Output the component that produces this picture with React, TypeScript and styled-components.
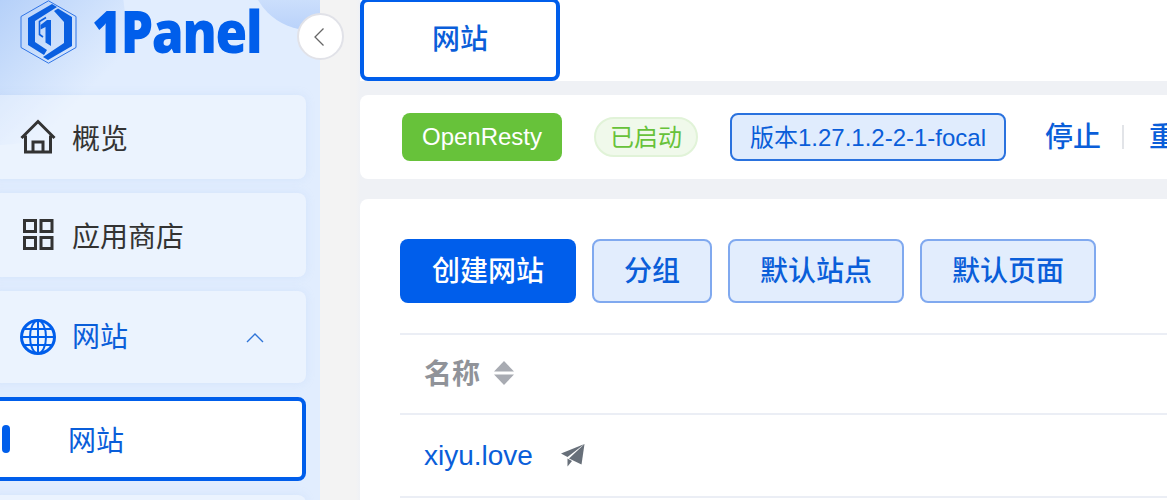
import React from "react";
import styled, { createGlobalStyle } from "styled-components";

const Global = createGlobalStyle`
  html, body { margin: 0; padding: 0; height: 500px; overflow: hidden; background: #f3f3f3; }
  * { box-sizing: border-box; }
  body { font-family: "Liberation Sans", "Noto Sans CJK SC", sans-serif; }
`;

const BLUE = "#005eeb";
const TEXT_BLUE = "#0a5ed9";

const Page = styled.div`
  display: flex;
  width: 1167px;
  height: 500px;
  overflow: hidden;
  position: relative;
`;

const Sidebar = styled.aside`
  position: relative;
  flex: 0 0 320px;
  height: 500px;
  overflow: hidden;
  background: #e1edfe;
`;

const BlobLeft = styled.div`
  position: absolute;
  left: -125px;
  top: -105px;
  width: 250px;
  height: 250px;
  border-radius: 50%;
  background: linear-gradient(135deg, #9cc0f6 25%, #e1edfe 82%);
`;

const BlobRight = styled.div`
  position: absolute;
  left: 250px;
  top: -90px;
  width: 120px;
  height: 120px;
  border-radius: 50%;
  background: linear-gradient(180deg, #e1edfe 45%, #b9d2fa 100%);
`;

const Brand = styled.div`
  position: relative;
  height: 95px;
  display: flex;
  align-items: flex-start;
  gap: 15px;
  padding-left: 20px;
`;

const BrandName = styled.span`
  font-family: "Open Sans", sans-serif;
  font-weight: 800;
  font-size: 58px;
  line-height: 62px;
  letter-spacing: -1.500px;
  color: ${BLUE};
  transform: scaleX(0.885);
  transform-origin: left center;
  white-space: nowrap;
`;

const Nav = styled.nav`
  position: relative;
  display: flex;
  flex-direction: column;
  gap: 14px;
  margin-left: -10px;
  width: 316px;
`;

const NavItem = styled.div<{ $tall?: boolean; $blue?: boolean }>`
  flex: none;
  height: ${(p) => (p.$tall ? 92 : 84)}px;
  display: flex;
  align-items: center;
  gap: 16px;
  padding: 0 42px 0 30px;
  border-radius: 8px;
  background: rgba(255, 255, 255, 0.34);
  box-shadow: 0 0 8px rgba(170, 200, 245, 0.25);
  font-size: 28px;
  color: ${(p) => (p.$blue ? TEXT_BLUE : "#333")};
`;

const ItemLabel = styled.span<{ $drop: number }>`
  flex: 1;
  line-height: 40px;
  padding-top: ${(p) => p.$drop}px;
`;

const IconSlot = styled.span`
  flex: 0 0 36px;
  height: 36px;
  display: block;
  & > svg { display: block; }
`;

const ActiveItem = styled.div`
  flex: none;
  height: 84px;
  display: flex;
  align-items: center;
  padding-left: 8px;
  border-radius: 8px;
  border: 4px solid ${BLUE};
  background: #fff;
  font-size: 28px;
  color: ${TEXT_BLUE};
`;

const ActiveMark = styled.span`
  flex: none;
  width: 8px;
  height: 28px;
  border-radius: 4px;
  background: ${BLUE};
  margin-right: 58px;
`;

const Collapse = styled.button`
  position: absolute;
  left: 297px;
  top: 13px;
  width: 47px;
  height: 47px;
  padding: 0 4px 0 0;
  border-radius: 50%;
  border: 2px solid #e1e2e8;
  background: #fff;
  display: flex;
  align-items: center;
  justify-content: center;
  z-index: 2;
`;

const Main = styled.main`
  flex: 1;
  min-width: 0;
  padding-left: 40px;
  display: flex;
  flex-direction: column;
  align-items: stretch;
  height: 500px;
  overflow: hidden;
  background: linear-gradient(90deg, #f3f3f3 0, #f3f3f3 36px, #eff1f5 40px);
`;

const TabBar = styled.div`
  flex: none;
  height: 81px;
  background: #fff;
  display: flex;
  align-items: flex-end;
`;

const Tab = styled.div`
  width: 200px;
  height: 83px;
  padding-bottom: 6px;
  border: 4px solid ${BLUE};
  border-radius: 8px;
  display: flex;
  align-items: center;
  justify-content: center;
  font-size: 28px;
  font-weight: 500;
  color: ${TEXT_BLUE};
`;

const StatusCard = styled.section`
  flex: none;
  margin-top: 14px;
  height: 84px;
  background: #fff;
  border-radius: 8px 0 0 8px;
  display: flex;
  align-items: center;
  padding-left: 42px;
  white-space: nowrap;
`;

const AppTag = styled.span`
  flex: none;
  height: 48px;
  width: 160px;
  border-radius: 8px;
  background: #67c23a;
  color: #fff;
  font-size: 24px;
  display: flex;
  align-items: center;
  justify-content: center;
`;

const StateTag = styled.span`
  flex: none;
  margin-left: 32px;
  width: 104px;
  height: 40px;
  padding-bottom: 4px;
  border-radius: 20px;
  border: 2px solid #e1f3d8;
  background: #f0f9eb;
  color: #67c23a;
  font-size: 24px;
  display: flex;
  align-items: center;
  justify-content: center;
`;

const VersionTag = styled.span`
  flex: none;
  margin-left: 32px;
  width: 276px;
  height: 48px;
  padding-bottom: 4px;
  border-radius: 8px;
  border: 2px solid #2a72de;
  background: #e0ecfd;
  color: ${TEXT_BLUE};
  font-size: 24px;
  display: flex;
  align-items: center;
  justify-content: center;
`;

const ActionLink = styled.span`
  flex: none;
  padding-bottom: 4px;
  font-size: 28px;
  font-weight: 500;
  color: ${TEXT_BLUE};
`;

const ActionGroup = styled.div`
  flex: none;
  margin-left: 39px;
  display: flex;
  align-items: center;
`;

const Divider = styled.span`
  flex: none;
  width: 2px;
  height: 24px;
  margin: 0 25px 0 21px;
  background: #e2e4e8;
`;

const ListCard = styled.section`
  flex: 1;
  margin-top: 20px;
  background: #fff;
  border-radius: 8px 0 0 0;
  padding: 40px 0 0 40px;
`;

const Toolbar = styled.div`
  display: flex;
  gap: 16px;
  height: 64px;
`;

const Button = styled.button<{ $primary?: boolean; $w: number }>`
  width: ${(p) => p.$w}px;
  height: 64px;
  padding: 0 0 4px;
  border-radius: 8px;
  font-family: inherit;
  font-size: 28px;
  font-weight: 500;
  border: ${(p) => (p.$primary ? "none" : "2px solid #80a9ef")};
  background: ${(p) => (p.$primary ? BLUE : "#e2edfd")};
  color: ${(p) => (p.$primary ? "#fff" : TEXT_BLUE)};
`;

const HeadRow = styled.div`
  margin-top: 30px;
  height: 82px;
  border-top: 2px solid #ebeef5;
  border-bottom: 2px solid #ebeef5;
  display: flex;
  align-items: center;
  padding: 0 0 2px 24px;
  gap: 14px;
`;

const HeadLabel = styled.span`
  font-size: 28px;
  font-weight: 700;
  color: #909399;
  padding-bottom: 2px;
`;

const DataRow = styled.div`
  height: 83px;
  border-bottom: 2px solid #ebeef5;
  display: flex;
  align-items: center;
  padding-left: 24px;
  gap: 28px;
`;

const SiteLink = styled.span`
  font-size: 28px;
  color: ${TEXT_BLUE};
`;

const Logo = () => (
  <svg width="57" height="64" viewBox="0 0 57 64">
    <path d="M28.500 .8 56 16.500v31L28.500 63.200 1 47.500v-31z" fill="none" stroke="#2f74e6" strokeWidth="1" />
    <path d="M32 4 37 7 15 21V42L27 50 24 55 8 45V18z" fill="#0a5fe0" />
    <path d="M34 11 38 8.500 52 17V46L28 60 23 57 44 43V22z" fill="#0a5fe0" />
    <path d="M26 17.500 19.500 21.500V34.500L23 37" fill="none" stroke="#0a5fe0" strokeWidth="1.600" />
    <path d="M20.500 25 27 20H31V46L25.500 42.500V27L20.500 29.500z" fill="#0a5fe0" />
  </svg>
);

const HomeIcon = () => (
  <svg width="36" height="36" viewBox="0 0 36 36" fill="none" stroke="#333" strokeWidth="3">
    <path d="M1.500 19 18 2.500 34.500 19" strokeLinejoin="miter" />
    <path d="M5.500 16.500V33h25V16.500" />
    <path d="M13 33V23h10v10" />
  </svg>
);

const GridIcon = () => (
  <svg width="36" height="36" viewBox="0 0 36 36" fill="none" stroke="#333" strokeWidth="3">
    <rect x="4.500" y="3.500" width="11" height="11" />
    <rect x="21" y="3.500" width="11" height="11" />
    <rect x="4.500" y="20.500" width="11" height="11" />
    <rect x="21" y="20.500" width="11" height="11" />
  </svg>
);

const GlobeIcon = () => (
  <svg width="36" height="36" viewBox="0 0 36 36" fill="none" stroke={BLUE}>
    <circle cx="18" cy="18" r="16.500" strokeWidth="3" />
    <ellipse cx="18" cy="18" rx="8" ry="16.500" strokeWidth="2" />
    <path d="M18 2v32M2 18h32M4.500 10h27M4.500 26h27" strokeWidth="2" />
  </svg>
);

const ChevronUp = () => (
  <svg width="18" height="11" viewBox="0 0 18 11" fill="none" stroke="#2f74d8" strokeWidth="1.400">
    <path d="M1 10 9 2l8 8" />
  </svg>
);

const ChevronLeft = () => (
  <svg width="12" height="20" viewBox="0 0 12 20" fill="none" stroke="#666" strokeWidth="1.300">
    <path d="M10.500 1.500 2 10l8.500 8.500" />
  </svg>
);

const SortCarets = () => (
  <svg width="20" height="24" viewBox="0 0 20 24" fill="#a8abb2">
    <path d="M10 0 20 10.500H0z" />
    <path d="M0 13.500h20L10 24z" />
  </svg>
);

const PlaneIcon = () => (
  <svg width="24" height="23" viewBox="0 0 24 23" fill="#676f79">
    <path d="M23.500 0 0 9.500l6.500 3.500z" />
    <path d="M23.500 0 8 14.500l12.500 6z" />
    <path d="M6.500 14.500V22.500l4.500-5.500z" />
  </svg>
);

export default function App() {
  return (
    <Page>
      <Global />
      <Sidebar>
        <BlobLeft />
        <BlobRight />
        <Brand>
          <Logo />
          <BrandName>1Panel</BrandName>
        </Brand>
        <Nav>
          <NavItem>
            <IconSlot><HomeIcon /></IconSlot>
            <ItemLabel $drop={6}>概览</ItemLabel>
          </NavItem>
          <NavItem>
            <IconSlot><GridIcon /></IconSlot>
            <ItemLabel $drop={6}>应用商店</ItemLabel>
          </NavItem>
          <NavItem $tall $blue>
            <IconSlot><GlobeIcon /></IconSlot>
            <ItemLabel $drop={2}>网站</ItemLabel>
            <ChevronUp />
          </NavItem>
          <ActiveItem>
            <ActiveMark />
            网站
          </ActiveItem>
          <NavItem />
        </Nav>
      </Sidebar>
      <Collapse aria-label="collapse"><ChevronLeft /></Collapse>
      <Main>
        <TabBar>
          <Tab>网站</Tab>
        </TabBar>
        <StatusCard>
          <AppTag>OpenResty</AppTag>
          <StateTag>已启动</StateTag>
          <VersionTag>版本1.27.1.2-2-1-focal</VersionTag>
          <ActionGroup>
            <ActionLink>停止</ActionLink>
            <Divider />
            <ActionLink>重启</ActionLink>
          </ActionGroup>
        </StatusCard>
        <ListCard>
          <Toolbar>
            <Button $primary $w={176}>创建网站</Button>
            <Button $w={120}>分组</Button>
            <Button $w={176}>默认站点</Button>
            <Button $w={176}>默认页面</Button>
          </Toolbar>
          <HeadRow>
            <HeadLabel>名称</HeadLabel>
            <SortCarets />
          </HeadRow>
          <DataRow>
            <SiteLink>xiyu.love</SiteLink>
            <PlaneIcon />
          </DataRow>
        </ListCard>
      </Main>
    </Page>
  );
}
